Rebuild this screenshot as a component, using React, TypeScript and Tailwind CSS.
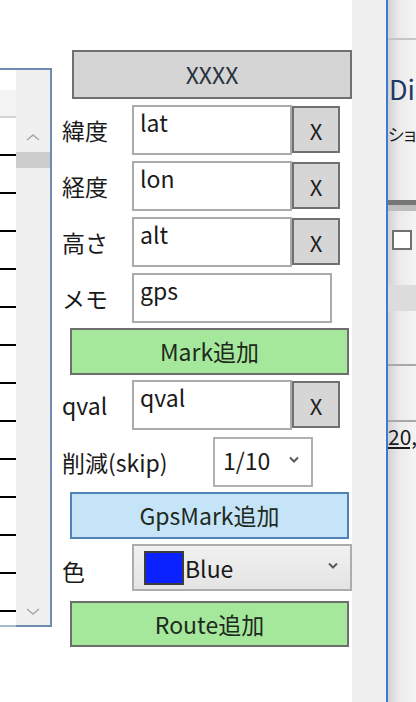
import React from 'react';

// small chevron used by the scrollbar and the drop-down boxes
const Chevron = ({ up = false, className = '' }: { up?: boolean; className?: string }) => (
  <svg width="14" height="7" viewBox="0 0 14 7" className={className}>
    <polyline
      points={up ? '1,6 7,1 13,6' : '1,1 7,6 13,1'}
      fill="none"
      stroke="currentColor"
      strokeWidth="1.5"
    />
  </svg>
);

const DropArrow = ({ className = '' }: { className?: string }) => (
  <svg width="10" height="7" viewBox="0 0 10 7" className={className}>
    <polyline points="1,1.5 5,5.5 9,1.5" fill="none" stroke="currentColor" strokeWidth="2" />
  </svg>
);

const ListPane = () => {
  const rows = Array.from({ length: 13 }, (_, i) => i);
  return (
    <div className="w-[52px] shrink-0 pt-[68px]">
      <div className="flex h-[559px] border-t-2 border-r-2 border-[#6f8bb0]">
        <div className="flex w-[16px] flex-col overflow-hidden border-b-2 border-[#a8bad0]">
          <div className="h-[20px] shrink-0 bg-white" />
          <div className="h-[26px] shrink-0 bg-[#f3f3f3]" />
          <div className="h-[2px] shrink-0 bg-[#d2d2d2]" />
          {rows.map((i) => (
            <div key={i} className="h-[38px] shrink-0 border-b-2 border-black" />
          ))}
        </div>
        <div className="flex w-[34px] flex-col items-center border-b-2 border-[#6f8bb0] bg-[#f0f0f0] text-[#a6a6a6]">
          <Chevron up className="mt-[64px]" />
          <div className="mt-[11px] h-[16px] w-full bg-[#cdcdcd]" />
          <div className="flex-1" />
          <Chevron className="mb-[10px]" />
        </div>
      </div>
    </div>
  );
};

const ClearButton = () => (
  <button className="mt-px h-[47px] w-[48px] self-start border-2 border-[#707070] bg-[#d6d6d6] text-[22px] leading-none text-[#1e1e1e]">
    X
  </button>
);

const FieldRow = ({
  label,
  value,
  clear = true,
  className = '',
}: {
  label: string;
  value: string;
  clear?: boolean;
  className?: string;
}) => (
  <div className={`flex h-[50px] ${className}`}>
    <span className="w-[80px] self-center pl-[10px] text-[23px] leading-[28px]">{label}</span>
    <div
      className={`h-[50px] border-2 border-[#ababab] bg-white px-[6px] pt-px text-[23px] leading-[28px] ${
        clear ? 'w-[160px]' : 'w-[200px]'
      }`}
    >
      {value}
    </div>
    {clear && <ClearButton />}
  </div>
);

const ActionButton = ({
  children,
  tone,
  className = '',
}: {
  children: React.ReactNode;
  tone: 'green' | 'blue';
  className?: string;
}) => (
  <button
    className={`ml-[18px] w-[279px] border-2 text-[23px] leading-none text-[#1d2a1d] ${
      tone === 'green' ? 'border-[#6e6e6e] bg-[#a6e89b]' : 'border-[#4f83b3] bg-[#c6e4f8]'
    } ${className}`}
  >
    {children}
  </button>
);

const FormPane = () => (
  <div className="flex w-[300px] shrink-0 flex-col text-[#1a1a1a]">
    <button className="ml-[20px] mt-[50px] h-[49px] w-[280px] border-2 border-[#707070] bg-[#d5d5d5] text-[23px] leading-none text-[#2a3340]">
      XXXX
    </button>

    <div className="mt-[6px] flex flex-col gap-[6px]">
      <FieldRow label="緯度" value="lat" />
      <FieldRow label="経度" value="lon" />
      <FieldRow label="高さ" value="alt" />
      <FieldRow label="メモ" value="gps" clear={false} />
    </div>

    <ActionButton tone="green" className="mt-[5px] h-[47px]">
      Mark追加
    </ActionButton>

    <FieldRow label="qval" value="qval" className="mt-[5px]" />

    <div className="mt-[7px] flex h-[50px]">
      <span className="w-[161px] self-center pl-[10px] text-[23px] leading-[28px]">削減(skip)</span>
      <div className="flex h-[50px] w-[100px] items-center border-2 border-[#b0b0b0] bg-white pl-[8px] pr-[12px] text-[23px] leading-[28px]">
        <span className="-mt-[4px] flex-1">1/10</span>
        <DropArrow className="-mt-[6px] text-[#5a5a5a]" />
      </div>
    </div>

    <ActionButton tone="blue" className="mt-[5px] h-[47px]">
      GpsMark追加
    </ActionButton>

    <div className="mt-[5px] flex h-[47px]">
      <span className="w-[80px] self-center pl-[10px] pt-[6px] text-[23px] leading-[28px]">色</span>
      <div className="flex h-[47px] w-[220px] items-center border-2 border-[#adadad] bg-[linear-gradient(to_bottom,#f1f1f1,#e4e4e4)] pl-[10px] pr-[12px]">
        <div className="h-[34px] w-[40px] border-2 border-[#3c3c3c] bg-[#0a22ff]" />
        <span className="ml-px flex-1 text-[23px] leading-[28px]">Blue</span>
        <DropArrow className="-mt-[4px] text-[#5a5a5a]" />
      </div>
    </div>

    <ActionButton tone="green" className="mt-[10px] h-[46px]">
      Route追加
    </ActionButton>
  </div>
);

// the neighbouring window peeking in on the right
const SidePane = () => (
  <div className="flex min-w-0 flex-1 flex-col overflow-hidden whitespace-nowrap bg-[linear-gradient(to_right,#d2d2d2,#ebebeb_40%,#f4f4f4)] text-[#1a1a1a]">
    <div className="mt-[38px] h-[2px] shrink-0 bg-[#c6c6c6]" />
    <div className="mt-[32px] pl-px text-[27px] leading-[34px] text-[#1f3864]">Di</div>
    <div className="mt-[15px] text-[17px] leading-[26px] [font-feature-settings:'palt']">ショ</div>
    <div className="mt-[53px] h-[5px] shrink-0 bg-[#767676]" />
    <div className="h-[6px] shrink-0 bg-[#bdbdbd]" />
    <div className="ml-[4px] mt-[19px] h-[20px] w-[20px] shrink-0 border-2 border-[#707070] bg-white" />
    <div className="mt-[35px] h-[26px] shrink-0 bg-[#dcdcdc]" />
    <div className="mt-[53px] h-[2px] shrink-0 bg-[#a8a8a8]" />
    <div className="mt-[54px] h-[2px] shrink-0 bg-[#a8a8a8]" />
    <div className="text-[21px] leading-[28px] underline underline-offset-2">20,</div>
  </div>
);

export default function App() {
  return (
    <div className="flex h-[702px] w-[416px] overflow-hidden bg-white font-['Noto_Sans_CJK_JP','Noto_Sans',sans-serif]">
      <ListPane />
      <FormPane />
      <div className="w-[34px] shrink-0 bg-[#f0f0f0]" />
      <div className="w-[2px] shrink-0 bg-[#3a7bd5]" />
      <SidePane />
    </div>
  );
}
